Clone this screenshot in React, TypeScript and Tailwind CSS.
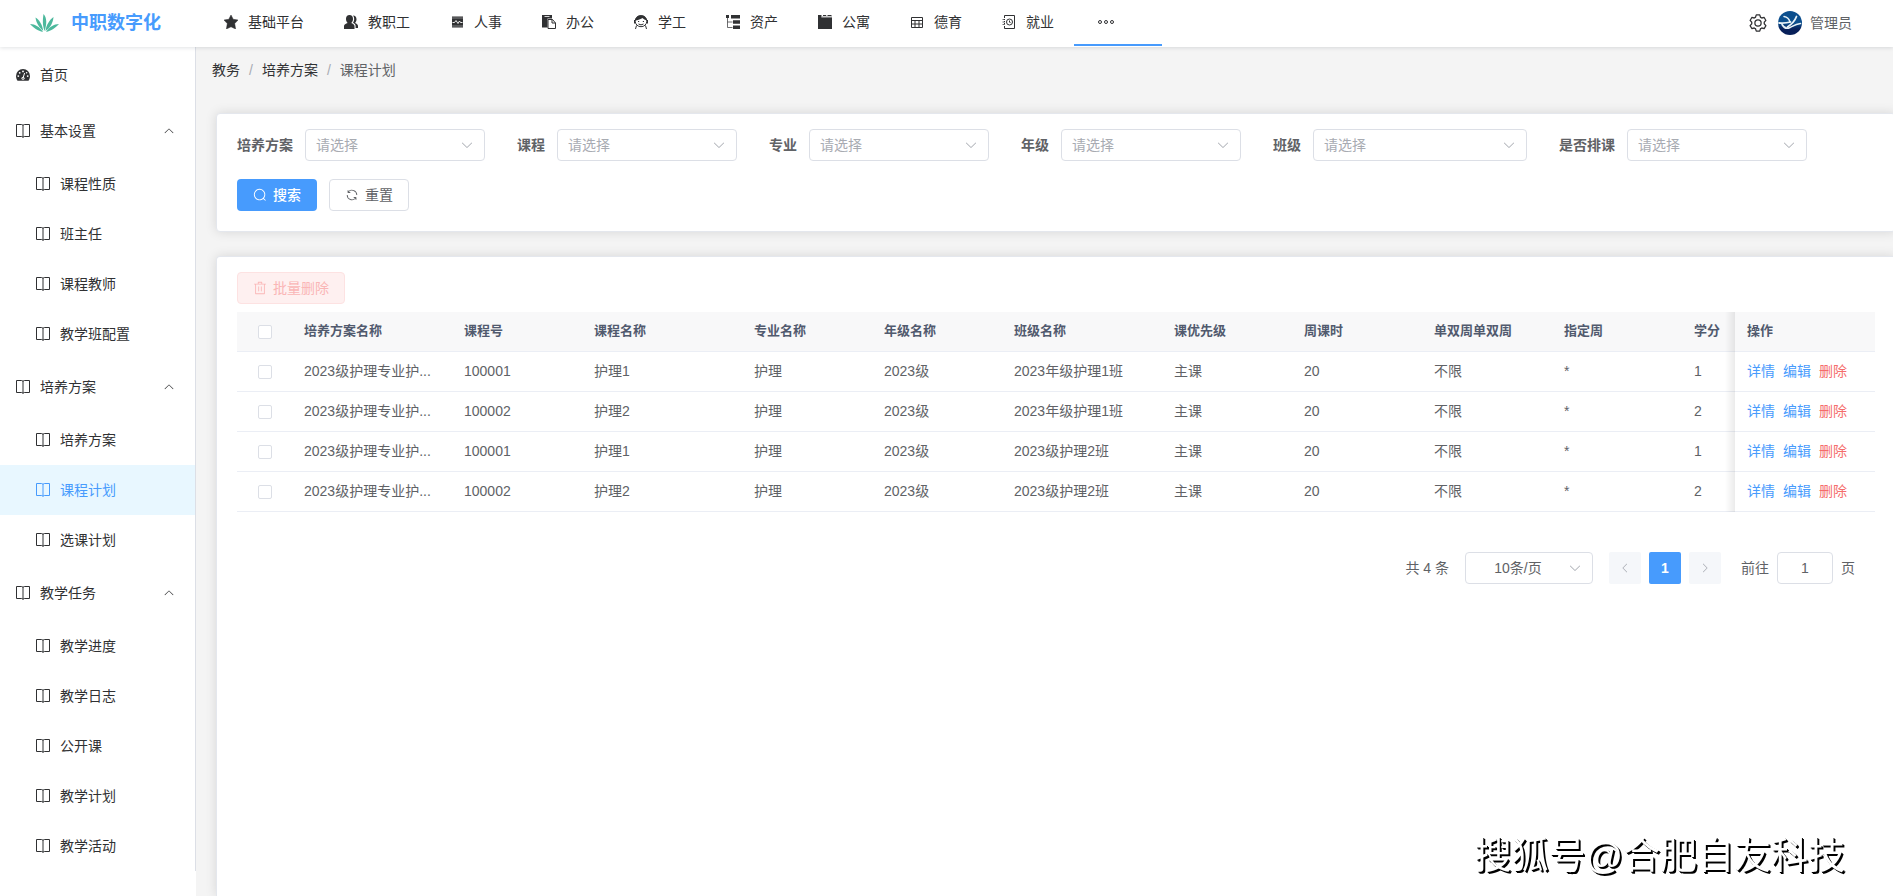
import { ReactNode, useState } from "react";
import clsx from "clsx";

type IconProps = { className?: string };

const PATHS = {
  search:
    "m795.904 750.72 124.992 124.928a32 32 0 0 1-45.248 45.248L750.656 795.904a416 416 0 1 1 45.248-45.248zM480 832a352 352 0 1 0 0-704 352 352 0 0 0 0 704z",
  refresh:
    "M771.776 794.88A384 384 0 0 1 128 512h64a320 320 0 0 0 555.712 216.448H654.72a32 32 0 1 1 0-64h149.056a32 32 0 0 1 32 32v148.928a32 32 0 1 1-64 0v-50.56zM276.288 295.616h92.992a32 32 0 0 1 0 64H220.16a32 32 0 0 1-32-32V178.56a32 32 0 0 1 64 0v50.56A384 384 0 0 1 896.128 512h-64a320 320 0 0 0-555.776-216.384z",
  trash:
    "M160 256H96a32 32 0 0 1 0-64h256V95.936a32 32 0 0 1 32-32h256a32 32 0 0 1 32 32V192h256a32 32 0 1 1 0 64h-64v672a32 32 0 0 1-32 32H192a32 32 0 0 1-32-32V256zm448-64v-64H416v64h192zM224 896h576V256H224v640zm192-128a32 32 0 0 1-32-32V416a32 32 0 0 1 64 0v320a32 32 0 0 1-32 32zm192 0a32 32 0 0 1-32-32V416a32 32 0 0 1 64 0v320a32 32 0 0 1-32 32z",
  arrow:
    "M831.872 340.864 512 652.672 192.128 340.864a30.592 30.592 0 0 0-42.752 0 29.12 29.12 0 0 0 0 41.6L489.664 714.24a32 32 0 0 0 44.672 0l340.288-331.712a29.12 29.12 0 0 0 0-41.728 30.592 30.592 0 0 0-42.752 0z",
  setting:
    "M600.704 64a32 32 0 0 1 30.464 22.208l35.2 109.376c14.784 7.232 28.928 15.36 42.432 24.512l112.384-24.192a32 32 0 0 1 34.432 15.36L944.32 364.8a32 32 0 0 1-4.032 37.504l-77.12 85.12a357.12 357.12 0 0 1 0 49.024l77.12 85.248a32 32 0 0 1 4.032 37.504l-88.704 153.6a32 32 0 0 1-34.432 15.296L708.8 803.904c-13.44 9.088-27.648 17.28-42.368 24.512l-35.264 109.376A32 32 0 0 1 600.704 960H423.296a32 32 0 0 1-30.464-22.208L357.696 828.48a351.616 351.616 0 0 1-42.56-24.64l-112.32 24.256a32 32 0 0 1-34.432-15.36L79.68 659.2a32 32 0 0 1 4.032-37.504l77.12-85.248a357.12 357.12 0 0 1 0-48.896l-77.12-85.248A32 32 0 0 1 79.68 364.8l88.704-153.6a32 32 0 0 1 34.432-15.296l112.32 24.256c13.568-9.152 27.776-17.408 42.56-24.64l35.2-109.312A32 32 0 0 1 423.232 64H600.64zm-23.424 64H446.72l-36.352 113.088-24.512 11.968a294.113 294.113 0 0 0-34.816 20.096l-22.656 15.36-116.224-25.088-65.28 113.152 79.68 88.192-1.92 27.136a293.12 293.12 0 0 0 0 40.192l1.92 27.136-79.808 88.192 65.344 113.152 116.224-25.024 22.656 15.296a294.113 294.113 0 0 0 34.816 20.096l24.512 11.968L446.72 896h130.688l36.48-113.152 24.448-11.904a288.282 288.282 0 0 0 34.752-20.096l22.592-15.296 116.288 25.024 65.28-113.152-79.744-88.192 1.92-27.136a293.12 293.12 0 0 0 0-40.256l-1.92-27.136 79.808-88.128-65.344-113.152-116.288 24.96-22.592-15.232a287.616 287.616 0 0 0-34.752-20.096l-24.448-11.904L577.344 128zM512 320a192 192 0 1 1 0 384 192 192 0 0 1 0-384zm0 64a128 128 0 1 0 0 256 128 128 0 0 0 0-256z",
};

function Icon({
  name,
  className = "size-3.5",
}: IconProps & { name: keyof typeof PATHS }) {
  return (
    <svg viewBox="0 0 1024 1024" fill="currentColor" className={className}>
      <path d={PATHS[name]} />
    </svg>
  );
}

function Glyph({ children }: { children: ReactNode }) {
  return (
    <svg
      viewBox="0 0 14 14"
      fill="none"
      stroke="currentColor"
      className="size-3.5 shrink-0"
    >
      {children}
    </svg>
  );
}

const BookIcon = () => (
  <Glyph>
    <path d="M0.5 0.5h5.2L7 1.2 8.3 0.5h5.2v12H8.3L7 13.2 5.7 12.5H0.5z" />
    <path d="M7 1v12.5" strokeWidth="2" opacity="0.5" />
  </Glyph>
);

const GaugeIcon = () => (
  <Glyph>
    <path
      d="M7 1a7 7 0 0 0-7 7c0 1.8.6 3.400 1.500 4.700h11C13.400 11.400 14 9.800 14 8a7 7 0 0 0-7-7z"
      fill="currentColor"
      stroke="none"
    />
    <g fill="#fff" stroke="none">
      <circle cx="7" cy="3.400" r="0.900" />
      <circle cx="3.700" cy="4.800" r="0.900" />
      <circle cx="2.300" cy="8.100" r="0.900" />
      <circle cx="11.700" cy="8.100" r="0.900" />
      <circle cx="10.600" cy="4.800" r="0.800" />
      <circle cx="7" cy="10.300" r="1.500" />
    </g>
    <path d="M7.200 9.500 8.600 5" stroke="#fff" />
    <circle cx="7" cy="10.300" r="0.600" fill="currentColor" stroke="none" />
  </Glyph>
);

const NAV: { label: string; icon: ReactNode }[] = [
  {
    label: "基础平台",
    icon: (
      <path
        d="M7 0l2.200 4.300 4.800.7-3.300 3.600.9 5.400L7 11.800 2.400 14l.9-5.400L0 5l4.800-.7z"
        fill="currentColor"
        stroke="currentColor"
        strokeWidth="0.500"
        strokeLinejoin="round"
      />
    ),
  },
  {
    label: "教职工",
    icon: (
      <g fill="currentColor" stroke="none">
        <path d="M5.500 0C3.300 0 2 1.600 2 4c0 1.700.7 3.200 1.700 4C1.800 8.700 0 9.400 0 11v3h10.500v-3c0-1.600-1.700-2.300-3.300-3C8.300 7.200 9 5.700 9 4c0-2.400-1.300-4-3.500-4z" />
        <path d="M9 .6c2.200 0 3.500 1.500 3.500 3.700 0 1.600-.6 2.800-1.500 3.600 1.700.7 3 1.400 3 3.100v2h-2.400v-2c0-1.500-1-2.400-2.600-3.200.8-1 1.200-2.300 1.200-3.800 0-1.300-.4-2.500-1.200-3.400z" />
      </g>
    ),
  },
  {
    label: "人事",
    icon: (
      <>
        <rect x="2" y="1.500" width="11" height="11" fill="currentColor" stroke="none" />
        <path d="M2 3h11M2 11h11" stroke="#fff" strokeWidth="0.400" />
        <path d="M2.500 7.500h2L6 5.500l2 3 1.500-2.500 1 1.500h2" stroke="#fff" strokeWidth="0.900" />
      </>
    ),
  },
  {
    label: "办公",
    icon: (
      <>
        <path d="M0 0h10v3.500H5.500V12.500H0z" fill="currentColor" stroke="none" />
        <path d="M2.500 1.500h5" stroke="#fff" strokeWidth="0.800" />
        <path d="M6 4.500h4.500L13.500 8v5.500H6z" fill="#fff" />
        <path d="M10 4.500V8h3.500" />
      </>
    ),
  },
  {
    label: "学工",
    icon: (
      <>
        <ellipse cx="7" cy="6.200" rx="5.800" ry="5.500" />
        <path
          d="M1 5.500C1.500 2 4 .3 7 .3s5.500 1.700 6 5.200C11 5 9.500 4 8.500 3 7 4.200 4 5.200 1 5.500z"
          fill="currentColor"
          stroke="none"
        />
        <path d="M0.500 5v3.500M13.500 5v3.500M2.500 10.500 1.500 14M11.500 10.500l1 3.500" />
        <path d="M4.500 9q2.500 1.800 5 0" />
        <path d="M4 6.500h1.200M8.800 6.500H10" />
      </>
    ),
  },
  {
    label: "资产",
    icon: (
      <>
        <path d="M0 0h3v3H0zM5 0h9v3.500H5zM7 5.200h7v3.500H7zM7 10.500h7V14H7z" fill="currentColor" stroke="none" />
        <path d="M1.500 3v9.500H6.500M1.500 7H6.500" opacity="0.700" />
      </>
    ),
  },
  {
    label: "公寓",
    icon: (
      <>
        <path d="M0 0h3.500v2.500H14V14H0z" fill="currentColor" stroke="none" />
        <path d="M5 .5h3.200M9.500 .5H13.500" />
        <path d="M4 2h10" opacity="0.500" />
      </>
    ),
  },
  {
    label: "德育",
    icon: (
      <>
        <path d="M1.500 2.500h11v10h-11zM1.500 5.500h11M1.500 9h11M5 5.500v7M9 5.500v7" />
      </>
    ),
  },
  {
    label: "就业",
    icon: (
      <>
        <path d="M2.500 3V.5h10v13h-10V11" />
        <path d="M2.500 4v6" strokeDasharray="1 1" />
        <path d="M0.500 4.500h2.500M0.500 7h2.500M0.500 9.500h2.500" opacity="0.700" />
        <circle cx="7.500" cy="7" r="3" />
        <path d="M7.500 5.500V7l1 1" />
      </>
    ),
  },
];

const MENU = [
  { title: "基本设置", items: ["课程性质", "班主任", "课程教师", "教学班配置"] },
  { title: "培养方案", items: ["培养方案", "课程计划", "选课计划"] },
  {
    title: "教学任务",
    items: ["教学进度", "教学日志", "公开课", "教学计划", "教学活动"],
  },
];

const FILTERS = [
  { id: "plan", label: "培养方案" },
  { id: "course", label: "课程" },
  { id: "major", label: "专业" },
  { id: "grade", label: "年级" },
  { id: "class", label: "班级", wide: true },
  { id: "arranged", label: "是否排课" },
];

const COLUMNS = [
  { title: "培养方案名称", width: "w-40" },
  { title: "课程号", width: "w-[130px]" },
  { title: "课程名称", width: "w-40" },
  { title: "专业名称", width: "w-[130px]" },
  { title: "年级名称", width: "w-[130px]" },
  { title: "班级名称", width: "w-40" },
  { title: "课优先级", width: "w-[130px]" },
  { title: "周课时", width: "w-[130px]" },
  { title: "单双周单双周", width: "w-[130px]" },
  { title: "指定周", width: "w-[130px]" },
  { title: "学分", width: "w-[130px]" },
];

const PLAN = "2023级护理专业护...";
const ROWS = [
  [PLAN, "100001", "护理1", "护理", "2023级", "2023年级护理1班", "主课", "20", "不限", "*", "1"],
  [PLAN, "100002", "护理2", "护理", "2023级", "2023年级护理1班", "主课", "20", "不限", "*", "2"],
  [PLAN, "100001", "护理1", "护理", "2023级", "2023级护理2班", "主课", "20", "不限", "*", "1"],
  [PLAN, "100002", "护理2", "护理", "2023级", "2023级护理2班", "主课", "20", "不限", "*", "2"],
];

function Header() {
  return (
    <header className="relative z-20 flex h-[47px] shrink-0 items-center bg-white pb-px shadow-[0_1px_4px_rgba(0,21,41,0.12)]">
      <a href="#" className="flex w-[204px] shrink-0 items-center gap-3 pl-[30px]">
        <svg viewBox="0 0 29 18" className="h-[18px] w-[29px]" fill="#4cb89c">
          <path d="M14.500 17C12.500 11 12.500 7 13.500 0c3.500 4 3.500 10 1 17z" />
          <path d="M13.200 17C12.500 11 9.500 6 5.500 3.500c.5 5 3.500 10 7.700 13.500z" />
          <path d="M15.500 17c.5-6 4-11 8-14-.5 6-3.500 11-8 14z" />
          <path d="M13 18C10 13 5 10 0 10c3 3.500 8 7 13 8z" />
          <path d="M16 18c3-5 8-8 13-8-3 3.500-8 7-13 8z" />
        </svg>
        <span className="text-lg leading-6 font-bold text-[#479bfd]">中职数字化</span>
      </a>
      <nav className="flex h-full flex-1 items-start text-[#303133]">
        {NAV.map((item) => (
          <a
            key={item.label}
            href="#"
            className="flex h-11 items-center gap-2.5 px-5 whitespace-nowrap"
          >
            <Glyph>{item.icon}</Glyph>
            {item.label}
          </a>
        ))}
        <button
          aria-label="更多"
          className="flex h-[46px] w-[88px] items-center border-b-2 border-[#479bfd] pl-6"
        >
          <svg viewBox="0 0 16 6" fill="none" stroke="currentColor" className="h-1.5 w-4">
            <circle cx="2" cy="3" r="1.500" />
            <circle cx="8" cy="3" r="1.500" />
            <circle cx="14" cy="3" r="1.500" />
          </svg>
        </button>
      </nav>
      <div className="flex items-center pr-[41px] text-[#606266]">
        <button aria-label="设置" className="mr-2.5 text-[#303133]">
          <Icon name="setting" className="size-5" />
        </button>
        <button className="flex items-center gap-2">
          <svg viewBox="0 0 24 24" className="size-6">
            <defs>
              <linearGradient id="avatar" x1="0" y1="0" x2="0" y2="1">
                <stop offset="0.500" stopColor="#0c4f8e" />
                <stop offset="0.750" stopColor="#08205a" />
              </linearGradient>
            </defs>
            <circle cx="12" cy="12" r="12" fill="url(#avatar)" />
            <g fill="none" stroke="#e8f2f8" strokeLinecap="round">
              <path d="M6 5.500c3 .5 5 2 6 5.500" strokeWidth="1.500" />
              <path d="M1 12c4 .3 8 0 11.500-1" strokeWidth="1.800" />
              <path d="M18.500 5.500c-1.500 4-4.500 7.500-9 10.500" strokeWidth="1.800" />
              <path d="M4 13.500c2 3.500 5 4.500 8 3 3.500-1.800 6-3.500 10.500-4" strokeWidth="1.600" />
            </g>
          </svg>
          管理员
        </button>
      </div>
    </header>
  );
}

function Sidebar() {
  const [active, setActive] = useState("1-课程计划");
  return (
    <aside className="w-[196px] shrink-0 bg-white">
      <nav className="border-r border-[#dcdfe6] text-[#303133]">
        <a href="#" className="flex h-14 items-center gap-2.5 px-4">
          <GaugeIcon />
          首页
        </a>
        {MENU.map((group, index) => (
          <div key={group.title}>
            <button className="flex h-14 w-full items-center gap-2.5 pr-5 pl-4">
              <BookIcon />
              <span className="flex-1 text-left">{group.title}</span>
              <Icon name="arrow" className="size-3 rotate-180" />
            </button>
            {group.items.map((item) => {
              const key = `${index}-${item}`;
              return (
                <a
                  key={key}
                  href="#"
                  onClick={() => setActive(key)}
                  className={clsx(
                    "flex h-[50px] items-center gap-2.5 pl-9",
                    active === key && "bg-[#e8f7ff] text-[#479bfd]"
                  )}
                >
                  <BookIcon />
                  {item}
                </a>
              );
            })}
          </div>
        ))}
      </nav>
    </aside>
  );
}

function FilterCard() {
  return (
    <section className="rounded border border-[#e4e7ed] bg-white px-5 pt-[15px] pb-5 shadow-[0_0_12px_rgba(0,0,0,0.12)]">
      <form onSubmit={(e) => e.preventDefault()}>
        <div className="flex flex-wrap gap-x-8 gap-y-[18px]">
          {FILTERS.map((filter) => (
            <div key={filter.id} className="flex items-center gap-3">
              <label htmlFor={filter.id} className="font-bold text-[#606266]">
                {filter.label}
              </label>
              <div className={clsx("relative", filter.wide ? "w-[214px]" : "w-[180px]")}>
                <select
                  id={filter.id}
                  className="h-8 w-full appearance-none rounded border border-[#dcdfe6] bg-white px-2.5 text-[#a8abb2]"
                >
                  <option>请选择</option>
                </select>
                <Icon
                  name="arrow"
                  className="pointer-events-none absolute top-[9px] right-[11px] size-3.5 text-[#a8abb2]"
                />
              </div>
            </div>
          ))}
        </div>
        <div className="mt-[18px] flex gap-3">
          <button
            type="submit"
            className="flex h-8 w-20 items-center justify-center gap-1.5 rounded bg-[#479bfd] font-medium text-white"
          >
            <Icon name="search" />
            搜索
          </button>
          <button
            type="reset"
            className="flex h-8 w-20 items-center justify-center gap-1.5 rounded border border-[#dcdfe6] bg-white text-[#606266]"
          >
            <Icon name="refresh" />
            重置
          </button>
        </div>
      </form>
    </section>
  );
}

function CheckBox({ label }: { label: string }) {
  return (
    <input
      type="checkbox"
      aria-label={label}
      className="block size-3.5 appearance-none rounded-xs border border-[#dcdfe6] bg-white checked:border-[#479bfd] checked:bg-[#479bfd]"
    />
  );
}

const PINNED =
  "sticky right-0 w-[140px] border-b border-[#ebeef5] px-3 text-left before:pointer-events-none before:absolute before:top-0 before:right-full before:-bottom-px before:w-2.5 before:bg-linear-to-l before:from-black/8 before:to-transparent";

function PlanTable() {
  return (
    <div className="overflow-hidden">
      <table className="w-[1715px] table-fixed border-separate border-spacing-0">
        <thead className="text-[13px] text-[#515a6e]">
          <tr className="h-10">
            <th className="w-[55px] border-b border-[#ebeef5] bg-[#f8f8f9] pl-[21px]">
              <CheckBox label="全选" />
            </th>
            {COLUMNS.map((column) => (
              <th
                key={column.title}
                className={clsx(
                  "border-b border-[#ebeef5] bg-[#f8f8f9] px-3 text-left font-bold whitespace-nowrap",
                  column.width
                )}
              >
                {column.title}
              </th>
            ))}
            <th className={clsx(PINNED, "bg-[#f8f8f9] font-bold")}>操作</th>
          </tr>
        </thead>
        <tbody className="text-[#606266]">
          {ROWS.map((row, index) => (
            <tr key={index} className="h-10">
              <td className="border-b border-[#ebeef5] pl-[21px]">
                <CheckBox label={`选择第${index + 1}行`} />
              </td>
              {row.map((cell, i) => (
                <td key={i} className="truncate border-b border-[#ebeef5] px-3 pb-0.5">
                  {cell}
                </td>
              ))}
              <td className={clsx(PINNED, "bg-white pb-0.5")}>
                <div className="flex gap-2">
                  <a href="#" className="text-[#479bfd]">详情</a>
                  <a href="#" className="text-[#479bfd]">编辑</a>
                  <a href="#" className="text-[#f56c6c]">删除</a>
                </div>
              </td>
            </tr>
          ))}
        </tbody>
      </table>
    </div>
  );
}

function Pagination() {
  return (
    <div className="mt-10 mr-5 flex items-center justify-end text-[#606266]">
      <span>共 4 条</span>
      <div className="relative mx-4 w-32">
        <select
          aria-label="每页条数"
          className="h-8 w-full appearance-none rounded border border-[#dcdfe6] bg-white pr-[22px] text-center"
        >
          <option>10条/页</option>
        </select>
        <Icon
          name="arrow"
          className="pointer-events-none absolute top-[9px] right-[11px] size-3.5 text-[#a8abb2]"
        />
      </div>
      <div className="flex gap-2">
        <button
          disabled
          aria-label="上一页"
          className="flex size-8 items-center justify-center rounded-xs bg-[#f5f7fa] text-[#a8abb2]"
        >
          <Icon name="arrow" className="size-3 rotate-90" />
        </button>
        <button className="size-8 rounded-xs bg-[#479bfd] font-bold text-white">1</button>
        <button
          disabled
          aria-label="下一页"
          className="flex size-8 items-center justify-center rounded-xs bg-[#f5f7fa] text-[#a8abb2]"
        >
          <Icon name="arrow" className="size-3 -rotate-90" />
        </button>
      </div>
      <label className="ml-5 flex items-center gap-2">
        前往
        <input
          defaultValue="1"
          className="h-8 w-14 rounded border border-[#dcdfe6] bg-white text-center"
        />
        页
      </label>
    </div>
  );
}

export default function App() {
  return (
    <div className="flex h-screen flex-col overflow-hidden bg-white font-['Liberation_Sans','Noto_Sans_CJK_SC',sans-serif] text-sm">
      <Header />
      <div className="flex min-h-0 flex-1">
        <Sidebar />
        <main className="flex min-w-0 flex-1 flex-col overflow-hidden bg-[#f4f4f4]">
          <div className="flex h-[46px] shrink-0 items-center gap-[9px] px-4 text-[#303133]">
            <a href="#">教务</a>
            <span className="text-[#a8abb2]">/</span>
            <a href="#">培养方案</a>
            <span className="text-[#a8abb2]">/</span>
            <span className="text-[#606266]">课程计划</span>
          </div>
          <div className="mt-5 -mr-[3px] ml-5 flex flex-1 flex-col gap-6">
            <FilterCard />
            <section className="flex-1 rounded-t border border-b-0 border-[#e4e7ed] bg-white px-5 pt-[15px] shadow-[0_0_12px_rgba(0,0,0,0.12)]">
              <button
                disabled
                className="mb-2 flex h-8 w-[108px] items-center justify-center gap-1.5 rounded border border-[#fde2e2] bg-[#fef0f0] text-[#fab6b6]"
              >
                <Icon name="trash" />
                批量删除
              </button>
              <PlanTable />
              <Pagination />
            </section>
          </div>
        </main>
      </div>
      <div className="pointer-events-none fixed right-12 bottom-3 z-30 text-[37px] leading-[54px] text-white [text-shadow:1px_1px_0_#000,2px_2px_0_#000]">
        搜狐号@合肥自友科技
      </div>
    </div>
  );
}
